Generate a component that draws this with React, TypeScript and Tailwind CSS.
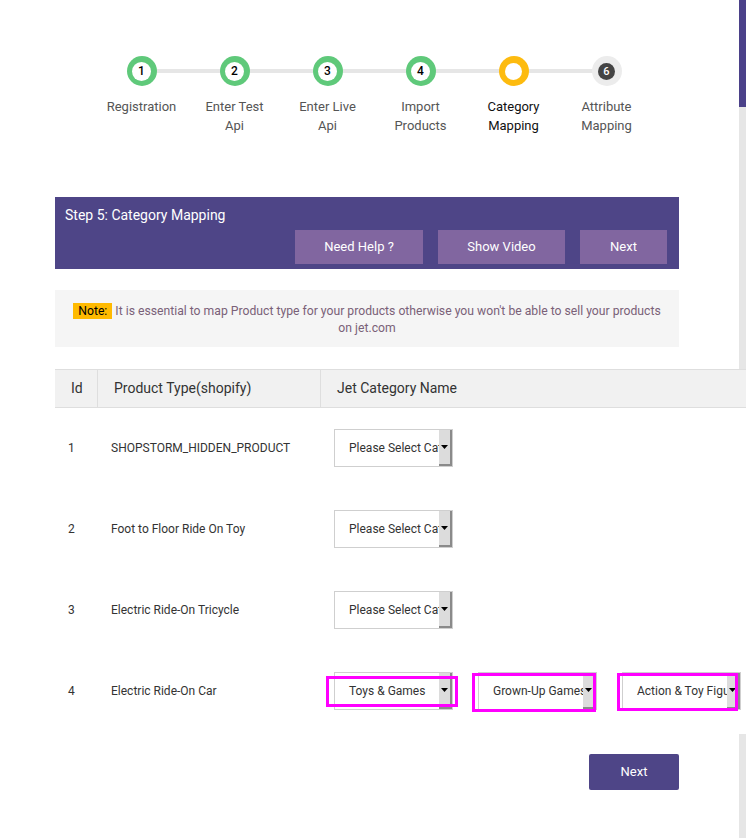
import React from "react";

const steps = [
  { n: "1", label: ["Registration"], state: "done" },
  { n: "2", label: ["Enter Test", "Api"], state: "done" },
  { n: "3", label: ["Enter Live", "Api"], state: "done" },
  { n: "4", label: ["Import", "Products"], state: "done" },
  { n: "", label: ["Category", "Mapping"], state: "active" },
  { n: "6", label: ["Attribute", "Mapping"], state: "todo" },
];

const rows = [
  { id: "1", type: "SHOPSTORM_HIDDEN_PRODUCT", selects: ["Please Select Category"] },
  { id: "2", type: "Foot to Floor Ride On Toy", selects: ["Please Select Category"] },
  { id: "3", type: "Electric Ride-On Tricycle", selects: ["Please Select Category"] },
  { id: "4", type: "Electric Ride-On Car", selects: ["Toys & Games", "Grown-Up Games", "Action & Toy Figures"] },
];

// magenta highlight boxes for the last row, relative to each select
const marks = [
  "-left-[8px] top-[4px] w-[132px] h-[31px]",
  "-left-[6px] top-[1px] w-[124px] h-[39px]",
  "-left-[5px] top-[1px] w-[121px] h-[38px]",
];

const Circle: React.FC<{ n: string; state: string }> = ({ n, state }) => {
  if (state === "done") {
    return (
      <div className="relative z-10 w-[30px] h-[30px] rounded-full bg-[#5fc97a] flex items-center justify-center">
        <div className="w-[19px] h-[19px] rounded-full bg-white flex items-center justify-center text-[12px] font-medium text-black leading-none">
          {n}
        </div>
      </div>
    );
  }
  if (state === "active") {
    return (
      <div className="relative z-10 w-[30px] h-[30px] rounded-full bg-[#fdbb0f] flex items-center justify-center">
        <div className="w-[17px] h-[17px] rounded-full bg-white" />
      </div>
    );
  }
  return (
    <div className="relative z-10 w-[30px] h-[30px] rounded-full bg-[#ececec] flex items-center justify-center">
      <div className="w-[17px] h-[17px] rounded-full bg-[#444] flex items-center justify-center text-[11px] font-medium text-white leading-none">
        {n}
      </div>
    </div>
  );
};

const FakeSelect: React.FC<{ text: string }> = ({ text }) => (
  <div className="relative w-[119px] h-[38px] border border-[#cfcfcf] bg-white flex items-center overflow-hidden">
    <span className="pl-[14px] pr-[14px] whitespace-nowrap overflow-hidden text-[12px] text-[#333] w-full">
      {text}
    </span>
    <div className="absolute right-0 top-0 bottom-0 w-[13px] bg-[#dcdcdc] border-r-2 border-b-2 border-[#8a8a8a] flex items-center justify-center">
      <svg width="7" height="4" viewBox="0 0 7 4">
        <path d="M0 0h7L3.5 4z" fill="#000" />
      </svg>
    </div>
  </div>
);

export default function App() {
  return (
    <div className="relative min-h-[838px] bg-white overflow-hidden font-['Roboto',sans-serif]">
      {/* right side strip */}
      <div className="absolute right-0 top-0 w-[7px] h-[107px] bg-[#4b4189]" />
      <div className="absolute right-0 top-[107px] w-[7px] h-[262px] bg-[#e6e6e6]" />
      <div className="absolute right-0 top-[734px] w-[7px] h-[104px] bg-[#e6e6e6]" />

      {/* stepper */}
      <div className="flex pt-[56px] pl-[95px]">
        {steps.map((s, i) => (
          <div key={i} className="relative w-[93px] flex flex-col items-center">
            {i < steps.length - 1 && (
              <div className="absolute left-1/2 top-[13px] w-[93px] h-[4px] bg-[#e6e6e6]" />
            )}
            <Circle n={s.n} state={s.state} />
            <div
              className={`mt-[11px] text-[13px] leading-[19px] text-center ${
                s.state === "active" ? "text-[#111]" : "text-[#555]"
              }`}
            >
              {s.label.map((l) => (
                <div key={l}>{l}</div>
              ))}
            </div>
          </div>
        ))}
      </div>

      {/* step header */}
      <div className="mt-[62px] ml-[55px] w-[624px] h-[72px] bg-[#4e4587] pl-[10px] pr-[12px] pt-[9px] flex flex-col">
        <div className="text-[14px] leading-[18px] text-white">Step 5: Category Mapping</div>
        <div className="mt-[6px] flex justify-end gap-[15px]">
          <button className="w-[128px] h-[34px] bg-[#8166a0] text-white text-[13px]">Need Help ?</button>
          <button className="w-[127px] h-[34px] bg-[#8166a0] text-white text-[13px]">Show Video</button>
          <button className="w-[87px] h-[34px] bg-[#8166a0] text-white text-[13px]">Next</button>
        </div>
      </div>

      {/* note */}
      <div className="mt-[21px] ml-[55px] w-[624px] h-[57px] bg-[#f5f5f5] px-[14px] pt-[13px] text-center text-[12.2px] leading-[17px] text-[#7a6178]">
        <span className="bg-[#ffba00] text-black px-[5px] py-[1px]">Note:</span>{" "}
        It is essential to map Product type for your products otherwise you won't be able to sell your products on jet.com
      </div>

      {/* table */}
      <div className="relative mt-[22px] ml-[55px] bg-white">
        <div className="flex h-[39px] bg-[#f1f1f1] border-t border-b border-[#dedede] text-[14px] text-[#333]">
          <div className="w-[43px] flex items-center pl-[16px] border-r border-[#dedede]">Id</div>
          <div className="w-[223px] flex items-center pl-[16px] border-r border-[#dedede]">Product Type(shopify)</div>
          <div className="flex-1 flex items-center pl-[16px]">Jet Category Name</div>
        </div>
        {rows.map((r) => (
          <div key={r.id} className="flex items-center h-[81px] pb-[1px] text-[12px] text-[#333]">
            <div className="w-[43px] pl-[13px]">{r.id}</div>
            <div className="w-[223px] pl-[13px] whitespace-nowrap">{r.type}</div>
            <div className="flex pl-[13px] gap-[25px]">
              {r.selects.map((t, j) => (
                <div key={t} className="relative">
                  <FakeSelect text={t} />
                  {r.selects.length > 1 && (
                    <div className={`absolute border-[3px] border-[#ff00ff] pointer-events-none ${marks[j]}`} />
                  )}
                </div>
              ))}
            </div>
          </div>
        ))}
      </div>

      {/* footer */}
      <div className="mt-[22px] ml-[589px]">
        <button className="w-[90px] h-[36px] rounded-[2px] bg-[#4e4587] text-white text-[13px]">Next</button>
      </div>
    </div>
  );
}
